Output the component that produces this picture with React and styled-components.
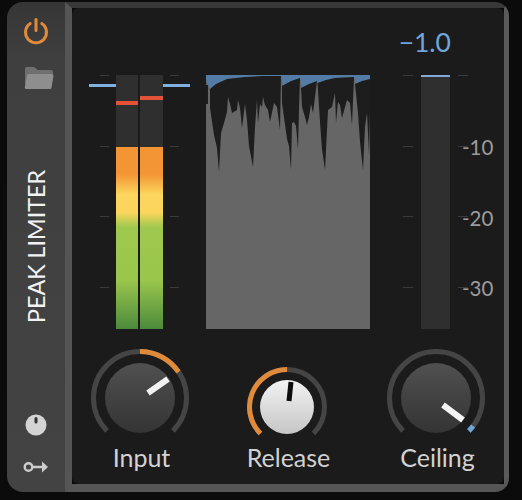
import React from 'react'
import styled, { createGlobalStyle } from 'styled-components'

const GlobalStyle = createGlobalStyle`
  html, body {
    margin: 0;
    background-color: #0b0b0b;
    font-family: Lato, "Open Sans", sans-serif;
  }
`

const Device = styled.div`
  display: flex;
  width: 502px;
  height: 490px;
  margin: 2px 0 0 7px;
  border-radius: 16px 14px 14px 16px;
  overflow: hidden;
`

const Sidebar = styled.div`
  display: flex;
  flex-direction: column;
  align-items: center;
  width: 58px;
  padding: 15px 0 18px;
  box-sizing: border-box;
  background: linear-gradient(#363636, #3f3f3f 12%, #434343);
`

const Folder = styled.svg`
  margin: 21px 0 0 5px;
`

const Title = styled.div`
  margin-top: 80px;
  writing-mode: vertical-rl;
  transform: rotate(180deg);
  font-size: 23.3px;
  line-height: 26px;
  color: #f2f2f2;
  white-space: nowrap;
`

const BottomIcons = styled.div`
  display: flex;
  flex-direction: column;
  align-items: center;
  gap: 24px;
  margin-top: auto;
`

const Main = styled.div`
  flex: 1;
  display: flex;
  border-style: solid;
  border-color: #383838 #5a5a5a #565656 #555555;
  border-width: 6px 5px 8px 7px;
`

const Panel = styled.div`
  flex: 1;
  display: flex;
  flex-direction: column;
  padding-left: 17px;
  background-color: #1b1b1b;
  border-radius: 7px;
`

const ValueRow = styled.div`
  display: flex;
  justify-content: flex-end;
  align-items: center;
  height: 67px;
  padding: 0 53px 0 0;
  box-sizing: border-box;
  font-size: 26.5px;
  color: #6ea6dc;
`

const Meters = styled.div`
  display: flex;
  height: 254px;
`

const MeterGroup = styled.div`
  position: relative;
  display: flex;
  justify-content: center;
  gap: 10px;
  width: 101px;
`

const Ticks = styled.div`
  display: flex;
  flex-direction: column;
  gap: 69.5px;
  width: ${(p) => p.$width}px;
`

const Tick = styled.div`
  display: flex;
  align-items: center;
  height: 1px;
  flex: none;
`

const TickMark = styled.span`
  flex: none;
  width: ${(p) => p.$width}px;
  height: 1px;
  background-color: #3b3b3b;
`

const TickLabel = styled.span`
  flex: none;
  margin: 2px 0 0 -6px;
  font-size: 20.5px;
  color: #9c9c9c;
`

const Bars = styled.div`
  display: flex;
  gap: 2px;
  margin: 0 -3px;
`

const Bar = styled.div`
  position: relative;
  display: flex;
  align-items: flex-end;
  width: ${(p) => p.$width}px;
  background-color: #2f2f2f;
`

const BarFill = styled.div`
  width: 100%;
  height: 182px;
  background: linear-gradient(
    #f39534 0%,
    #f39534 15%,
    #fcd65c 26%,
    #fcd65c 36%,
    #9fc84e 44%,
    #9ac64c 73%,
    #4c8a3c 100%
  );
`

const PeakMark = styled.div`
  position: absolute;
  left: 0;
  right: 0;
  top: ${(p) => p.$top}px;
  height: 4px;
  background-color: #e2533a;
`

const LevelLine = styled.div`
  position: absolute;
  top: 9px;
  ${(p) => p.$side}: 0;
  width: 27px;
  height: 3px;
  background-color: #7fb0e0;
`

const Reduction = styled.svg`
  display: block;
  margin-left: 16px;
`

const Ceiling = styled.div`
  display: flex;
  gap: 8px;
  margin-left: 33px;
`

const CeilingBar = styled.div`
  width: 29px;
  background-color: #2f2f2f;
  border-top: 2px solid #7fa9d6;
`

const KnobRow = styled.div`
  display: flex;
  align-items: flex-start;
  height: 155px;
`

const KnobCell = styled.div`
  display: flex;
  flex-direction: column;
  align-items: center;
  width: ${(p) => p.$width}px;
`

const KnobSlot = styled.div`
  display: flex;
  align-items: flex-end;
  justify-content: center;
  height: 121px;
`

const KnobLabel = styled.div`
  margin: -8px 0 0 3px;
  font-size: 25px;
  line-height: 30px;
  color: #d2d2d2;
`

const polar = (c, r, deg) => {
  const a = ((deg - 90) * Math.PI) / 180
  return [c + r * Math.cos(a), c + r * Math.sin(a)]
}

const arc = (c, r, from, to) => {
  const [x1, y1] = polar(c, r, from)
  const [x2, y2] = polar(c, r, to)
  const large = to - from > 180 ? 1 : 0
  return `M${x1} ${y1}A${r} ${r} 0 ${large} 1 ${x2} ${y2}`
}

const Knob = ({ id, size, ring, face, from, to, color, needle, needleColor, needleWidth, light }) => {
  const c = size / 2
  return (
    <svg width={size} height={size} viewBox={`0 0 ${size} ${size}`}>
      <defs>
        <linearGradient id={id} x1="0" y1="0" x2="0" y2="1">
          <stop offset="0" stopColor={light ? '#f2f2f2' : '#505050'} />
          <stop offset="1" stopColor={light ? '#c6c6c6' : '#343434'} />
        </linearGradient>
      </defs>
      <path d={arc(c, ring, -135, 135)} fill="none" stroke="#454545" strokeWidth="5" />
      <path d={arc(c, ring, from, to)} fill="none" stroke={color} strokeWidth="5" />
      <circle cx={c} cy={c} r={face} fill={`url(#${id})`} />
      <line
        x1={c + needle[0]}
        y1={c + needle[1]}
        x2={c + needle[2]}
        y2={c + needle[3]}
        stroke={needleColor}
        strokeWidth={needleWidth}
      />
    </svg>
  )
}

const darkShapes = [
  '206,85 208,85 208,104 206,104',
  '210,89 210,108 214,135 217,148 219,172 221,133 224,123 227,112 228,97 230,104 232,113 237,110 238,100 240,108 242,128 245,104 247,120 249,146 253,167 255,127 257,100 258,123 260,104 262,107 263,97 265,105 268,110 270,122 274,103 277,107 280,130 281,76 263,76 245,77 227,79 216,84',
  '282,86 282,103 287,139 289,146 291,170 292,123 294,122 296,126 298,149 299,110 300,78 291,81',
  '301,88 302,107 305,117 307,125 309,117 311,104 313,113 317,81 309,84',
  '317.5,83 320,122 322,149 325,170 328,110 332,107 335,93 336,123 338,102 340,105 342,118 347,100 350,103 352,125 354,77 335,78 326,80',
  '355,84 358,113 360,142 363,170 365,127 367,113 369,155 370,113 370,79 362,81',
]

const App = () => (
  <>
    <GlobalStyle />
    <Device>
      <Sidebar>
        <svg width="28" height="28" viewBox="0 0 28 28">
          <path d="M8.2 6.5a10.5 10.5 0 1 0 11.6 0" fill="none" stroke="#e08a3c" strokeWidth="3" strokeLinecap="round" />
          <path d="M14 2.5v11" fill="none" stroke="#e08a3c" strokeWidth="3" strokeLinecap="round" />
        </svg>
        <Folder width="30" height="24" viewBox="0 0 30 24">
          <path d="M1 3a2 2 0 0 1 2-2h7l4 3h13a2 2 0 0 1 2 2v2H6L1 20z" fill="#6f6f6f" />
          <path d="M5 8h23a1.5 1.5 0 0 1 1.5 1.7l-2 12a1.5 1.5 0 0 1-1.5 1.3H2a1.2 1.2 0 0 1-1.2-1.4L3 9.5A1.6 1.6 0 0 1 5 8z" fill="#8e8e8e" />
        </Folder>
        <Title>PEAK LIMITER</Title>
        <BottomIcons>
          <svg width="22" height="22" viewBox="0 0 22 22">
            <circle cx="11" cy="11" r="10.5" fill="#d4d4d4" />
            <rect x="9.5" y="3" width="3" height="6.5" rx="1.5" fill="#333333" />
          </svg>
          <svg width="26" height="14" viewBox="0 0 26 14">
            <circle cx="5.5" cy="7" r="3.8" fill="none" stroke="#cccccc" strokeWidth="2.4" />
            <path d="M9 7h14" stroke="#cccccc" strokeWidth="2.4" />
            <path d="M19 1.5 25 7l-6 5.5z" fill="#cccccc" />
          </svg>
        </BottomIcons>
      </Sidebar>
      <Main>
        <Panel>
          <ValueRow>−1.0</ValueRow>
          <Meters>
            <MeterGroup>
              <LevelLine $side="left" />
              <LevelLine $side="right" />
              <Ticks $width={9}>
                {[0, 1, 2, 3].map((i) => (
                  <Tick key={i}>
                    <TickMark $width={9} />
                  </Tick>
                ))}
              </Ticks>
              <Bars>
                <Bar $width={22}>
                  <PeakMark $top={26} />
                  <BarFill />
                </Bar>
                <Bar $width={23}>
                  <PeakMark $top={21} />
                  <BarFill />
                </Bar>
              </Bars>
              <Ticks $width={9}>
                {[0, 1, 2, 3].map((i) => (
                  <Tick key={i}>
                    <TickMark $width={9} />
                  </Tick>
                ))}
              </Ticks>
            </MeterGroup>
            <Reduction width="164" height="254" viewBox="206 75 164 254">
              <rect x="206" y="75" width="164" height="254" fill="#666666" />
              <polygon
                points="206,74 370,74 370,79 356,84 354,77 335,78 318,83 317,81 302,88 300,78 283,86 281,76 263,76 227,79 210,89 206,80"
                fill="#527ba6"
              />
              {darkShapes.map((points) => (
                <polygon key={points} points={points} fill="#1d1d1d" />
              ))}
            </Reduction>
            <Ceiling>
              <Ticks $width={10}>
                {[0, 1, 2, 3].map((i) => (
                  <Tick key={i}>
                    <TickMark $width={10} />
                  </Tick>
                ))}
              </Ticks>
              <CeilingBar />
              <Ticks $width={36}>
                {['', '-10', '-20', '-30'].map((label) => (
                  <Tick key={label}>
                    <TickMark $width={10} />
                    {label && <TickLabel>{label}</TickLabel>}
                  </Tick>
                ))}
              </Ticks>
            </Ceiling>
          </Meters>
          <KnobRow>
            <KnobCell $width={102}>
              <KnobSlot>
                <Knob
                  id="input"
                  size={104}
                  ring={46.5}
                  face={35}
                  from={0}
                  to={56}
                  color="#e08a3c"
                  needle={[8, -5, 28, -19]}
                  needleColor="#f4f4f4"
                  needleWidth={6}
                />
              </KnobSlot>
              <KnobLabel>Input</KnobLabel>
            </KnobCell>
            <KnobCell $width={192}>
              <KnobSlot>
                <Knob
                  id="release"
                  size={86}
                  ring={37.5}
                  face={27}
                  from={-135}
                  to={0}
                  color="#e08a3c"
                  needle={[2, -6, 4, -25]}
                  needleColor="#0c0c0c"
                  needleWidth={5}
                  light
                />
              </KnobSlot>
              <KnobLabel>Release</KnobLabel>
            </KnobCell>
            <KnobCell $width={106}>
              <KnobSlot>
                <Knob
                  id="ceiling"
                  size={104}
                  ring={46.5}
                  face={35}
                  from={127}
                  to={135}
                  color="#6ea6dc"
                  needle={[7, 7, 27, 22]}
                  needleColor="#f4f4f4"
                  needleWidth={6}
                />
              </KnobSlot>
              <KnobLabel>Ceiling</KnobLabel>
            </KnobCell>
          </KnobRow>
        </Panel>
      </Main>
    </Device>
  </>
)

export default App
